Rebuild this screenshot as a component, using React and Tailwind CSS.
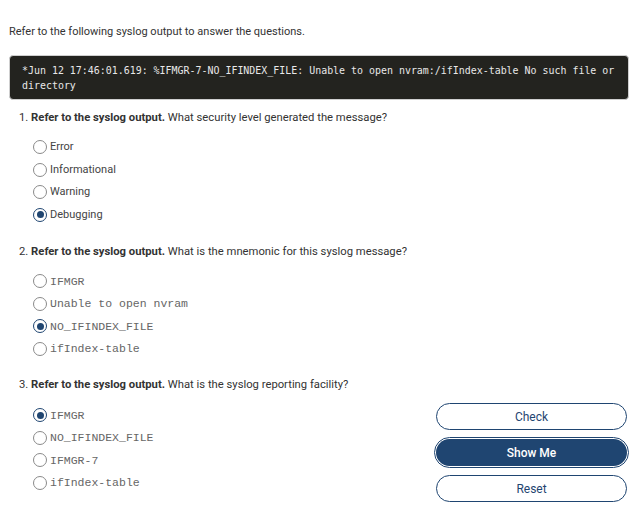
import React from "react";

function Radio({ checked }) {
  return checked ? (
    <span className="flex h-[14px] w-[14px] shrink-0 items-center justify-center rounded-full border-[1.5px] border-[#1f4571] bg-white">
      <span className="h-[7px] w-[7px] rounded-full bg-[#1f4571]" />
    </span>
  ) : (
    <span className="h-[14px] w-[14px] shrink-0 rounded-full border border-[#8a8a8a] bg-white" />
  );
}

function Option({ label, checked, mono }) {
  return (
    <div className="flex h-[22.5px] items-center gap-[3px]">
      <Radio checked={checked} />
      <span
        className={
          mono
            ? "font-['Liberation_Mono',monospace] text-[11.5px] text-[#666]"
            : "font-['Roboto',sans-serif] text-[11px] text-[#444]"
        }
      >
        {label}
      </span>
    </div>
  );
}

function Question({ n, text }) {
  return (
    <div className="pl-[19px] font-['Roboto',sans-serif] text-[11.25px] leading-[14px] text-[#333]">
      {n}. <b className="font-bold">Refer to the syslog output.</b> {text}
    </div>
  );
}

function Options({ items, mono }) {
  return (
    <div className="flex flex-col pl-[33px]">
      {items.map((it) => (
        <Option key={it.label} label={it.label} checked={it.checked} mono={mono} />
      ))}
    </div>
  );
}

export default function App() {
  return (
    <div className="h-[520px] w-[638px] overflow-hidden bg-white">
      <div className="px-[9px] pt-[25px] font-['Roboto',sans-serif] text-[11px] leading-[14px] text-[#333]">
        Refer to the following syslog output to answer the questions.
      </div>
      <div className="mx-[9px] mt-[16px] rounded-[4px] border border-[#cfcfcf] bg-[#23231f] px-[12px] pb-[6px] pt-[7px] font-['DejaVu_Sans_Mono',monospace] text-[9.95px] leading-[15px] text-[#e8e8e8]">
        *Jun 12 17:46:01.619: %IFMGR-7-NO_IFINDEX_FILE: Unable to open nvram:/ifIndex-table No such file or directory
      </div>

      <div className="mt-[11px]">
        <Question n={1} text="What security level generated the message?" />
        <div className="mt-[11px]">
          <Options
            items={[
              { label: "Error" },
              { label: "Informational" },
              { label: "Warning" },
              { label: "Debugging", checked: true },
            ]}
          />
        </div>
      </div>

      <div className="mt-[19px]">
        <Question n={2} text="What is the mnemonic for this syslog message?" />
        <div className="mt-[11px]">
          <Options
            mono
            items={[
              { label: "IFMGR" },
              { label: "Unable to open nvram" },
              { label: "NO_IFINDEX_FILE", checked: true },
              { label: "ifIndex-table" },
            ]}
          />
        </div>
      </div>

      <div className="mt-[18px] flex items-start justify-between pr-[9px]">
        <div>
          <Question n={3} text="What is the syslog reporting facility?" />
          <div className="mt-[12px]">
            <Options
              mono
              items={[
                { label: "IFMGR", checked: true },
                { label: "NO_IFINDEX_FILE" },
                { label: "IFMGR-7" },
                { label: "ifIndex-table" },
              ]}
            />
          </div>
        </div>
        <div className="mt-[25px] flex w-[195px] flex-col items-center gap-[7px] font-['Roboto',sans-serif] text-[12px]">
          <button className="h-[27px] w-[191px] rounded-full border-[1.5px] border-[#1f4571] bg-white text-[#1f4571]">
            Check
          </button>
          <button className="h-[31px] w-[195px] rounded-full border border-[#1f4571] bg-white p-[1px]">
            <span className="flex h-full w-full items-center justify-center rounded-full bg-[#1f4571] font-medium text-white">
              Show Me
            </span>
          </button>
          <button className="h-[27px] w-[191px] rounded-full border-[1.5px] border-[#1f4571] bg-white text-[#1f4571]">
            Reset
          </button>
        </div>
      </div>
    </div>
  );
}
